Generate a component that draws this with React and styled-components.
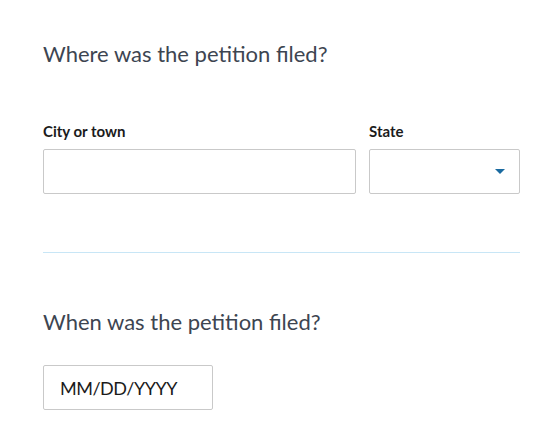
import React from 'react';
import styled, { createGlobalStyle } from 'styled-components';

const GlobalStyle = createGlobalStyle`
  body {
    margin: 0;
    background: #ffffff;
    font-family: 'Lato', 'Liberation Sans', sans-serif;
  }
`;

const Page = styled.div`
  width: 477px;
  padding: 38px 0 0 43px;
`;

const Question = styled.h2`
  margin: 0;
  font-size: 22px;
  line-height: 32px;
  font-weight: 400;
  color: #3d4551;
`;

const FieldRow = styled.div`
  display: flex;
  gap: 13px;
  margin-top: 52px;
`;

const Field = styled.div`
  display: flex;
  flex-direction: column;
  width: ${p => p.$width}px;
`;

const Label = styled.label`
  font-size: 15px;
  line-height: 18px;
  font-weight: 700;
  color: #1b1b1b;
  margin-bottom: 9px;
`;

const Box = styled.div`
  box-sizing: border-box;
  height: 45px;
  width: ${p => p.$width ? `${p.$width}px` : '100%'};
  margin-top: ${p => p.$top || 0}px;
  border: 1px solid #c9c9c9;
  border-radius: 2px;
  background: #fff;
  display: flex;
  align-items: center;
  padding: 0 16px;
  font-size: 18px;
  letter-spacing: -0.5px;
  color: #1b1b1b;
`;

const Caret = styled.span`
  margin-left: auto;
  margin-right: -2px;
  width: 0;
  height: 0;
  border-left: 5px solid transparent;
  border-right: 5px solid transparent;
  border-top: 5px solid #1a6aa0;
`;

const Divider = styled.hr`
  margin: 58px 0 0;
  border: 0;
  border-top: 1px solid #c8e6f6;
`;

const Section = styled.div`
  margin-top: 53px;
`;

export default function App() {
  return (
    <>
      <GlobalStyle />
      <Page>
        <Question>Where was the petition filed?</Question>
        <FieldRow>
          <Field $width={313}>
            <Label>City or town</Label>
            <Box />
          </Field>
          <Field $width={151}>
            <Label>State</Label>
            <Box>
              <Caret />
            </Box>
          </Field>
        </FieldRow>
        <Divider />
        <Section>
          <Question>When was the petition filed?</Question>
          <Box $width={170} $top={27}>MM/DD/YYYY</Box>
        </Section>
      </Page>
    </>
  );
}
